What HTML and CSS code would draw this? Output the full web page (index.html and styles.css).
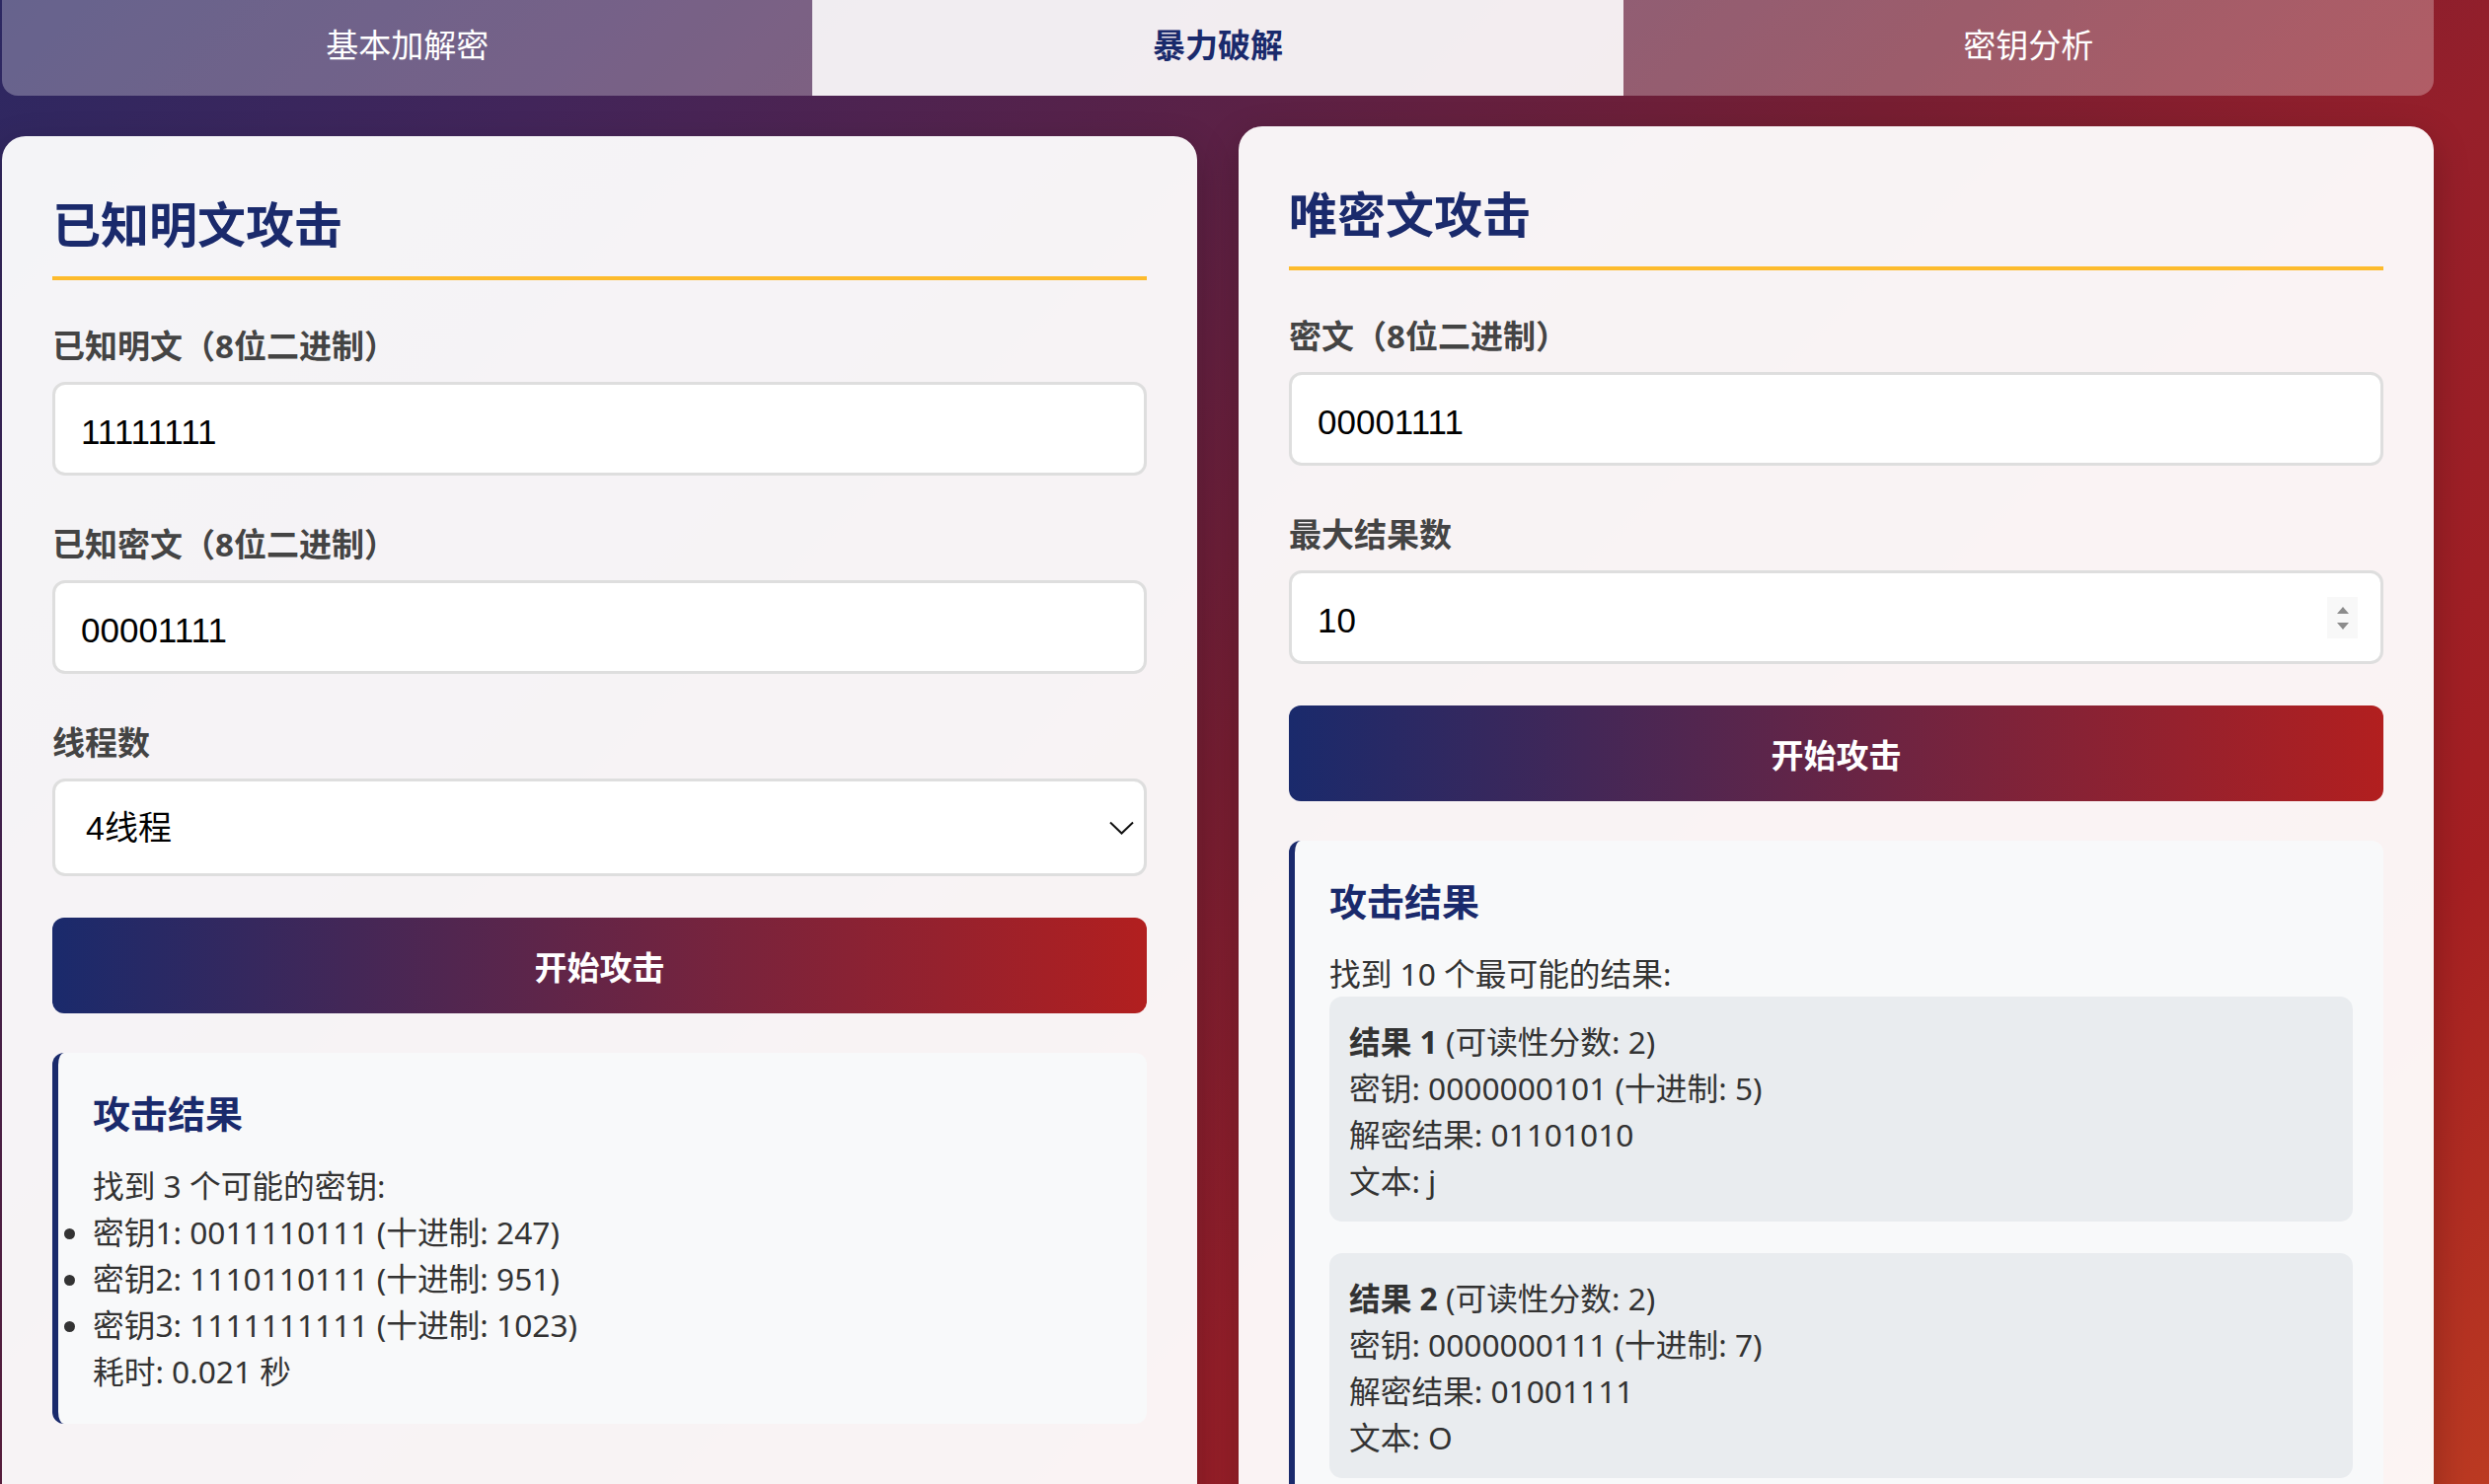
FILE: index.html
```html
<!DOCTYPE html>
<html lang="zh-CN">
<head>
<meta charset="UTF-8">
<title>暴力破解</title>
<link rel="stylesheet" href="styles.css">
</head>
<body>
<div class="page">
  <div class="container">
    <nav class="tabs">
      <div class="tab">基本加解密</div>
      <div class="tab active">暴力破解</div>
      <div class="tab">密钥分析</div>
    </nav>
    <div class="panels">
      <section class="card card-left">
        <h2 class="card-title">已知明文攻击</h2>
        <div class="form-group">
          <label class="field-label">已知明文（8位二进制）</label>
          <input class="text-input" type="text" value="11111111">
        </div>
        <div class="form-group">
          <label class="field-label">已知密文（8位二进制）</label>
          <input class="text-input" type="text" value="00001111">
        </div>
        <div class="form-group">
          <label class="field-label">线程数</label>
          <div class="select-wrap">
            <select class="text-input select">
              <option>4线程</option>
            </select>
            <svg class="chevron" viewBox="0 0 25 14" width="25" height="14"><path d="M1 1.5 L12.5 12.5 L24 1.5" fill="none" stroke="#111" stroke-width="2"/></svg>
          </div>
        </div>
        <button class="btn">开始攻击</button>
        <div class="result">
          <h3 class="result-title">攻击结果</h3>
          <p>找到 3 个可能的密钥:</p>
          <ul class="key-list">
            <li>密钥1: 0011110111 (十进制: 247)</li>
            <li>密钥2: 1110110111 (十进制: 951)</li>
            <li>密钥3: 1111111111 (十进制: 1023)</li>
          </ul>
          <p>耗时: 0.021 秒</p>
        </div>
      </section>
      <section class="card card-right">
        <h2 class="card-title">唯密文攻击</h2>
        <div class="form-group">
          <label class="field-label">密文（8位二进制）</label>
          <input class="text-input" type="text" value="00001111">
        </div>
        <div class="form-group">
          <label class="field-label">最大结果数</label>
          <div class="number-wrap">
            <input class="text-input" type="text" value="10">
            <span class="spin"><span class="spin-up"></span><span class="spin-down"></span></span>
          </div>
        </div>
        <button class="btn">开始攻击</button>
        <div class="result">
          <h3 class="result-title">攻击结果</h3>
          <p>找到 10 个最可能的结果:</p>
          <div class="item">
            <p><strong>结果 1</strong> (可读性分数: 2)</p>
            <p>密钥: 0000000101 (十进制: 5)</p>
            <p>解密结果: 01101010</p>
            <p>文本: j</p>
          </div>
          <div class="item">
            <p><strong>结果 2</strong> (可读性分数: 2)</p>
            <p>密钥: 0000000111 (十进制: 7)</p>
            <p>解密结果: 01001111</p>
            <p>文本: O</p>
          </div>
        </div>
      </section>
    </div>
  </div>
</div>
</body>
</html>
```

FILE: styles.css
```css
* {
  box-sizing: border-box;
}

html,
body {
  margin: 0;
  padding: 0;
}

body {
  font-family: "Noto Sans", "Noto Sans CJK SC", sans-serif;
  color: #333;
}

.page {
  height: 100vh;
  overflow: hidden;
  background: linear-gradient(135deg, #2c2862 0%, #42255a 16%, #5b2146 34%, #771e32 50%, #961f2a 65%, #a51f22 84%, #bb3a22 100%);
}

.container {
  width: 2464px;
  margin-left: 2px;
}

.tabs {
  display: flex;
  height: 97px;
  border-radius: 0 0 16px 16px;
  overflow: hidden;
}

.tab {
  flex: 1;
  display: flex;
  align-items: center;
  justify-content: center;
  padding-bottom: 10px;
  font-family: "Noto Sans CJK SC", sans-serif;
  font-size: 33px;
  color: #fff;
  background: rgba(255, 255, 255, 0.28);
}

.tab.active {
  background: rgba(255, 255, 255, 0.92);
  color: #1a2a6c;
  font-weight: 700;
}

.panels {
  display: grid;
  grid-template-columns: 1211px 1211px;
  column-gap: 42px;
  margin-top: 31px;
  align-items: stretch;
}

.card {
  background: rgba(255, 255, 255, 0.95);
  border-radius: 24px;
  padding: 60px 51px 40px;
  box-shadow: 0 12px 36px rgba(0, 0, 0, 0.22);
}

.card-left {
  margin-top: 10px;
}

.card-title {
  margin: 0 0 47px;
  padding-bottom: 24px;
  border-bottom: 4px solid #fdbb2d;
  font-size: 49px;
  line-height: 58px;
  font-weight: 700;
  color: #1a2a6c;
}

.field-label {
  display: block;
  margin-bottom: 16px;
  font-size: 33px;
  line-height: 40px;
  font-weight: 700;
  color: #444;
}

.form-group + .form-group {
  margin-top: 50px;
}

.text-input {
  display: block;
  width: 100%;
  height: 95px;
  padding: 6px 26px 0;
  border: 3px solid #dedede;
  border-radius: 13px;
  background: #fff;
  font-family: "Liberation Sans", "Noto Sans CJK SC", sans-serif;
  font-size: 35px;
  color: #000;
  outline: none;
}

.select-wrap,
.number-wrap {
  position: relative;
}

.select {
  -webkit-appearance: none;
  appearance: none;
  height: 99px;
  padding: 0 60px 0 31px;
  font-size: 34px;
}

.chevron {
  position: absolute;
  right: 13px;
  top: 43px;
  pointer-events: none;
}

.spin {
  position: absolute;
  right: 26px;
  top: 27px;
  width: 31px;
  height: 42px;
  background: #f8f8f8;
  display: flex;
  flex-direction: column;
  align-items: center;
  justify-content: center;
  gap: 9px;
}

.spin-up {
  width: 0;
  height: 0;
  border-left: 6px solid transparent;
  border-right: 6px solid transparent;
  border-bottom: 7px solid #8c8c8c;
}

.spin-down {
  width: 0;
  height: 0;
  border-left: 6px solid transparent;
  border-right: 6px solid transparent;
  border-top: 7px solid #8c8c8c;
}

.btn {
  display: block;
  width: 100%;
  height: 97px;
  margin-top: 42px;
  border: none;
  border-radius: 12px;
  background: linear-gradient(to right, #1a2a6c, #b21f1f);
  color: #fff;
  font-family: "Noto Sans CJK SC", sans-serif;
  font-size: 33px;
  font-weight: 700;
}

.result {
  margin-top: 40px;
  padding: 38px 31px 30px 35px;
  background: #f8f9fa;
  border-left: 6px solid #1a2a6c;
  border-radius: 12px;
}

.result-title {
  margin: 0 0 27px;
  font-size: 38px;
  line-height: 46px;
  font-weight: 700;
  color: #1a2a6c;
}

.result p,
.result li {
  margin: 0;
  font-size: 31.7px;
  line-height: 47px;
  color: #333;
}

.key-list {
  margin: 0;
  padding: 0;
  list-style: disc outside;
}

.item {
  padding: 22px 20px 18px;
  background: #e9ecef;
  border-radius: 13px;
}

.item + .item {
  margin-top: 32px;
}

.item strong {
  font-weight: 700;
}
```
